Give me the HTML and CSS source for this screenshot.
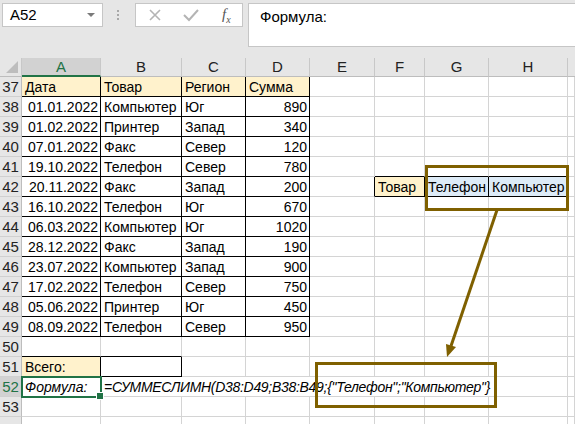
FILE: index.html
```html
<!DOCTYPE html>
<html lang="ru">
<head>
  <meta charset="UTF-8" />
  <title>СУММЕСЛИМН</title>
  <link rel="stylesheet" href="styles.css">
</head>
<body>
  <!-- formula bar -->
  <div class="bar">
    <div class="namebox">A52<span class="drop"></span></div>
    <div class="dots"><i></i><i></i><i></i></div>
    <div class="btns">
      <svg width="108" height="22" viewBox="0 0 108 22">
        <path d="M14 6 L24 16 M24 6 L14 16" stroke="#b4b4b4" stroke-width="1.6" fill="none"/>
        <path d="M48 11 L53 16 L62 6" stroke="#b4b4b4" stroke-width="2" fill="none"/>
      </svg>
      <span class="fx">f<sub>x</sub></span>
    </div>
    <div class="fbar">Формула:</div>
  </div>

  <!-- sheet -->
  <div class="sheet">
    <div class="corner"></div><div class="ch sel-col">A</div><div class="ch">B</div><div class="ch">C</div><div class="ch">D</div><div class="ch">E</div><div class="ch">F</div><div class="ch">G</div><div class="ch">H</div><div class="ch last"></div>

    <div class="rh">37</div><div class="c hd bd">Дата</div><div class="c hd bd">Товар</div><div class="c hd bd">Регион</div><div class="c hd bd">Сумма</div><div class="c"></div><div class="c"></div><div class="c"></div><div class="c"></div><div class="c"></div>
    <div class="rh">38</div><div class="c r bd">01.01.2022</div><div class="c bd">Компьютер</div><div class="c bd">Юг</div><div class="c r bd">890</div><div class="c"></div><div class="c"></div><div class="c"></div><div class="c"></div><div class="c"></div>
    <div class="rh">39</div><div class="c r bd">01.02.2022</div><div class="c bd">Принтер</div><div class="c bd">Запад</div><div class="c r bd">340</div><div class="c"></div><div class="c"></div><div class="c"></div><div class="c"></div><div class="c"></div>
    <div class="rh">40</div><div class="c r bd">07.01.2022</div><div class="c bd">Факс</div><div class="c bd">Север</div><div class="c r bd">120</div><div class="c"></div><div class="c"></div><div class="c"></div><div class="c"></div><div class="c"></div>
    <div class="rh">41</div><div class="c r bd">19.10.2022</div><div class="c bd">Телефон</div><div class="c bd">Север</div><div class="c r bd">780</div><div class="c"></div><div class="c bb"></div><div class="c bb"></div><div class="c bb"></div><div class="c"></div>
    <div class="rh">42</div><div class="c r bd">20.11.2022</div><div class="c bd">Факс</div><div class="c bd">Запад</div><div class="c r bd">200</div><div class="c br"></div><div class="c hd bd">Товар</div><div class="c blue bd">Телефон</div><div class="c blue bd">Компьютер</div><div class="c"></div>
    <div class="rh">43</div><div class="c r bd">16.10.2022</div><div class="c bd">Телефон</div><div class="c bd">Юг</div><div class="c r bd">670</div><div class="c"></div><div class="c"></div><div class="c"></div><div class="c"></div><div class="c"></div>
    <div class="rh">44</div><div class="c r bd">06.03.2022</div><div class="c bd">Компьютер</div><div class="c bd">Юг</div><div class="c r bd">1020</div><div class="c"></div><div class="c"></div><div class="c"></div><div class="c"></div><div class="c"></div>
    <div class="rh">45</div><div class="c r bd">28.12.2022</div><div class="c bd">Факс</div><div class="c bd">Запад</div><div class="c r bd">190</div><div class="c"></div><div class="c"></div><div class="c"></div><div class="c"></div><div class="c"></div>
    <div class="rh">46</div><div class="c r bd">23.07.2022</div><div class="c bd">Компьютер</div><div class="c bd">Запад</div><div class="c r bd">900</div><div class="c"></div><div class="c"></div><div class="c"></div><div class="c"></div><div class="c"></div>
    <div class="rh">47</div><div class="c r bd">17.02.2022</div><div class="c bd">Телефон</div><div class="c bd">Север</div><div class="c r bd">750</div><div class="c"></div><div class="c"></div><div class="c"></div><div class="c"></div><div class="c"></div>
    <div class="rh">48</div><div class="c r bd">05.06.2022</div><div class="c bd">Принтер</div><div class="c bd">Юг</div><div class="c r bd">450</div><div class="c"></div><div class="c"></div><div class="c"></div><div class="c"></div><div class="c"></div>
    <div class="rh">49</div><div class="c r bd">08.09.2022</div><div class="c bd">Телефон</div><div class="c bd">Север</div><div class="c r bd">950</div><div class="c"></div><div class="c"></div><div class="c"></div><div class="c"></div><div class="c"></div>
    <div class="rh">50</div><div class="c bb"></div><div class="c bb"></div><div class="c"></div><div class="c"></div><div class="c"></div><div class="c"></div><div class="c"></div><div class="c"></div><div class="c"></div>
    <div class="rh">51</div><div class="c hd bd">Всего:</div><div class="c bd"></div><div class="c"></div><div class="c"></div><div class="c"></div><div class="c"></div><div class="c"></div><div class="c"></div><div class="c"></div>
    <div class="rh sel-row">52</div><div class="c it sel">Формула:</div><div class="c it span7">=СУММЕСЛИМН(D38:D49;B38:B49;{"Телефон";"Компьютер"}</div><div class="c"></div>
    <div class="rh">53</div><div class="c"></div><div class="c"></div><div class="c"></div><div class="c"></div><div class="c"></div><div class="c"></div><div class="c"></div><div class="c"></div><div class="c"></div>
    <div class="rh"></div><div class="c"></div><div class="c"></div><div class="c"></div><div class="c"></div><div class="c"></div><div class="c"></div><div class="c"></div><div class="c"></div><div class="c"></div>
  </div>

  <!-- callouts drawn over the sheet -->
  <svg class="notes" width="575" height="424" viewBox="0 0 575 424">
    <g stroke="#7f6000" stroke-width="3" fill="none">
      <rect x="426.5" y="166.5" width="141" height="43"/>
      <rect x="316.5" y="363.5" width="179" height="43"/>
      <line x1="497" y1="210" x2="451" y2="346"/>
    </g>
    <polygon points="447,357 456,347 446,344" fill="#7f6000"/>
  </svg>
</body>
</html>
```
FILE: styles.css
```css
/* BASE */
* {
  margin: 0;
  padding: 0;
  box-sizing: border-box;
}
body {
  font-family: "Liberation Sans", Arial, sans-serif;
  font-size: 14px;
  color: #000;
  background: #fff;
  width: 575px;
  height: 424px;
  overflow: hidden;
  position: relative;
}
/* FORMULA BAR */
.bar {
  display: flex;
  align-items: flex-start;
  height: 58px;
  padding-top: 3px;
  background: #e6e6e6;
}
.namebox {
  position: relative;
  width: 101px;
  height: 24px;
  margin-left: 2px;
  padding-left: 7px;
  line-height: 22px;
  font-size: 15px;
  background: #fff;
  border: 1px solid #c6c6c6;
}
.drop {
  position: absolute;
  right: 7px;
  top: 9px;
  border-left: 4px solid transparent;
  border-right: 4px solid transparent;
  border-top: 4px solid #7a7a7a;
}
.dots {
  display: flex;
  flex-direction: column;
  gap: 2px;
  margin: 7px 0 0 14px;
  width: 18px;
}
.dots i {
  width: 2px;
  height: 2px;
  background: #a8a8a8;
}
.btns {
  position: relative;
  width: 108px;
  height: 24px;
  background: #fff;
  border: 1px solid #c6c6c6;
}
.btns svg {
  display: block;
}
.fx {
  position: absolute;
  left: 86px;
  top: 2px;
  font-family: "Liberation Serif", serif;
  font-style: italic;
  font-size: 15px;
  color: #555;
}
.fx sub {
  font-size: 10px;
}
.fbar {
  flex: 1;
  height: 44px;
  margin: 0 -2px 0 5px;
  padding: 4px 11px;
  font-size: 15px;
  background: #fff;
  border: 1px solid #c6c6c6;
}
/* SHEET */
.sheet {
  display: grid;
  grid-template-columns: 22px 79px 81px 64px 64px 65px 50px 64px 79px 1fr;
  grid-template-rows: 19px;
  grid-auto-rows: 20px;
}
.corner {
  position: relative;
  background: #e6e6e6;
  border-right: 1px solid #c8c8c8;
  border-bottom: 1px solid #bdbdbd;
}
.corner::after {
  content: "";
  position: absolute;
  right: 3px;
  bottom: 3px;
  border-left: 12px solid transparent;
  border-bottom: 12px solid #bdbdbd;
}
.ch {
  text-align: center;
  font-size: 15px;
  line-height: 18px;
  color: #222;
  background: #e6e6e6;
  border-right: 1px solid #c8c8c8;
  border-bottom: 1px solid #bdbdbd;
}
.ch.last {
  border-right: none;
}
.sel-col {
  color: #217346;
  background: #d2d2d2;
  border-bottom: 2px solid #217346;
}
.rh {
  text-align: center;
  font-size: 15px;
  line-height: 20px;
  color: #222;
  background: #e6e6e6;
  border-right: 1px solid #bdbdbd;
  border-bottom: 1px solid #d0d0d0;
}
.sel-row {
  color: #217346;
  background: #d2d2d2;
}
.c {
  position: relative;
  padding: 1px 2px 0 3px;
  line-height: 19px;
  white-space: nowrap;
  border-right: 1px solid #d4d4d4;
  border-bottom: 1px solid #d4d4d4;
}
.r {
  text-align: right;
}
.hd {
  background: #fff2cc;
}
.blue {
  background: #ddebf7;
}
.it {
  font-style: italic;
}
.span7 {
  grid-column: span 7;
  letter-spacing: -0.3px;
}
/* BLACK BORDERS */
.bd {
  border-right-color: #000;
  border-bottom-color: #000;
}
.bb {
  border-bottom-color: #000;
}
.br {
  border-right-color: #000;
}
/* ACTIVE CELL */
.sel::after {
  content: "";
  position: absolute;
  left: -1px;
  top: -1px;
  right: -2px;
  bottom: -2px;
  border: 2px solid #217346;
}
.sel::before {
  content: "";
  position: absolute;
  right: -4px;
  bottom: -4px;
  width: 6px;
  height: 6px;
  background: #217346;
  border: 1px solid #fff;
  z-index: 1;
}
/* CALLOUTS */
.notes {
  position: absolute;
  left: 0;
  top: 0;
  pointer-events: none;
}
```
